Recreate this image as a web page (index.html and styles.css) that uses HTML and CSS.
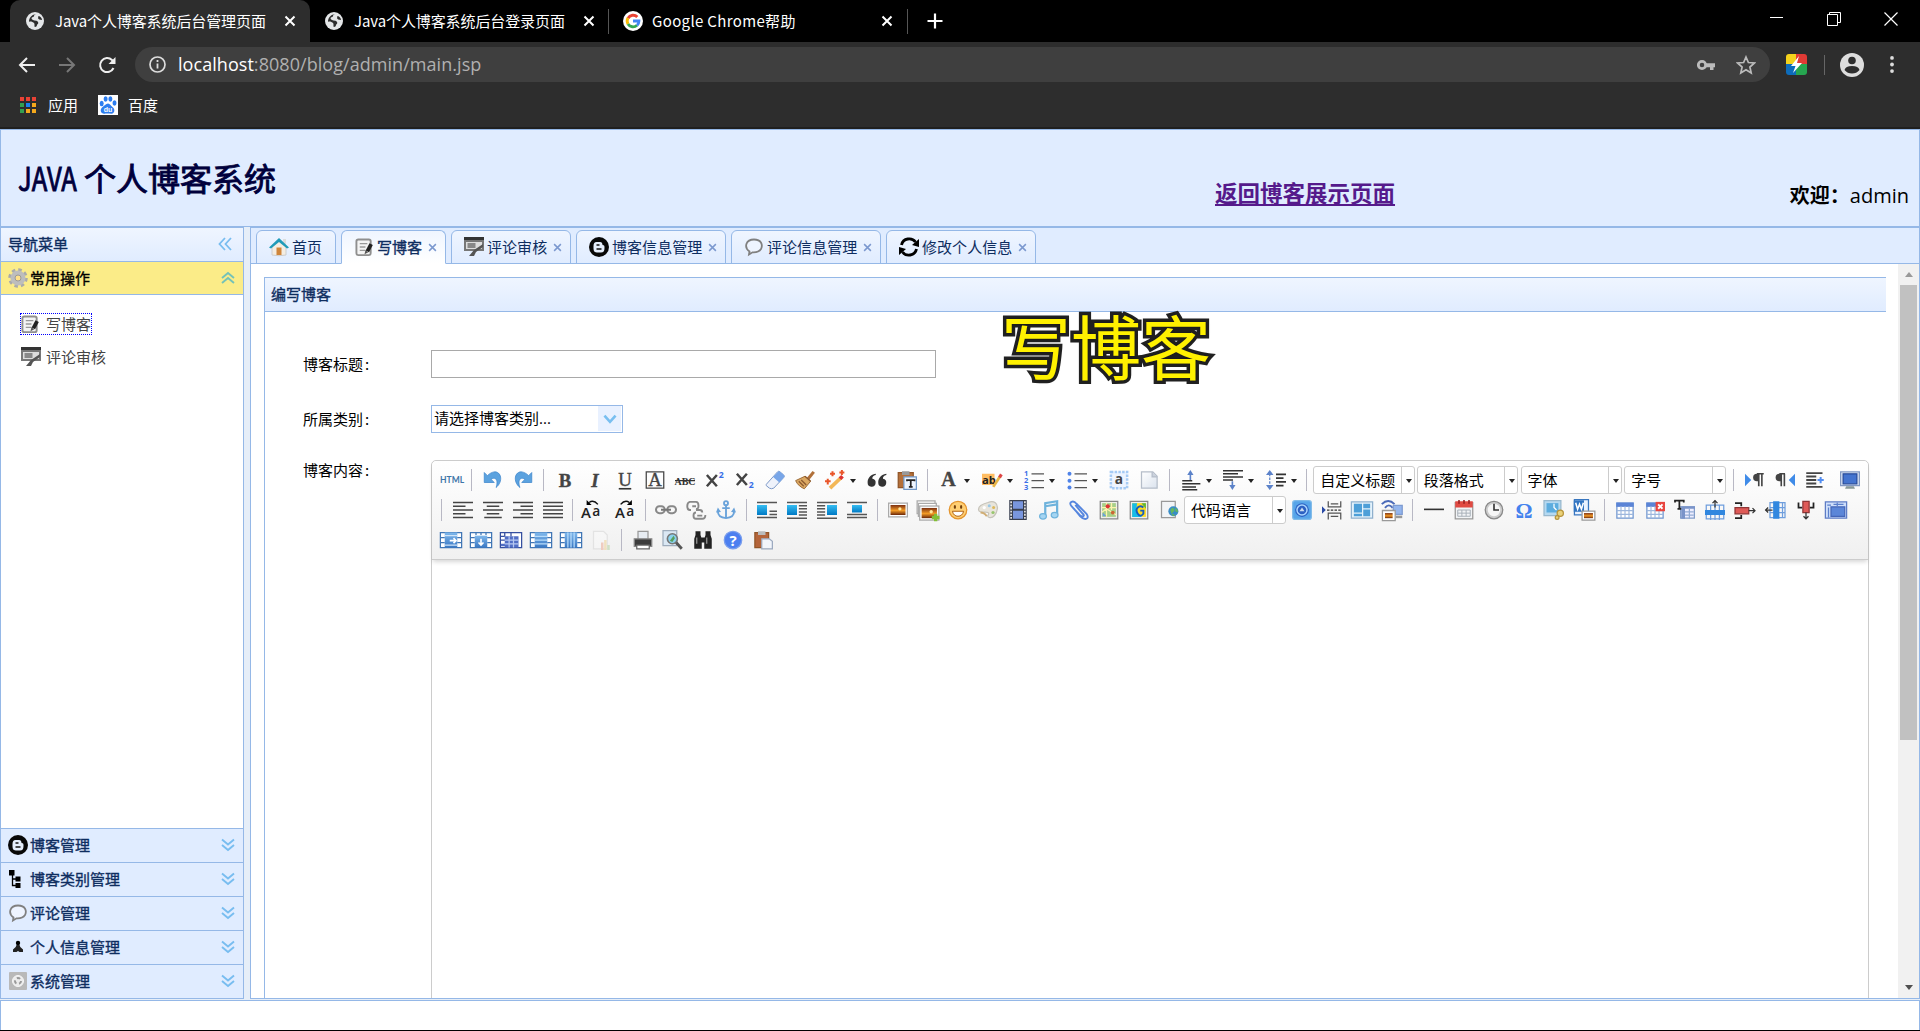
FILE: index.html
```html
<!DOCTYPE html>
<html lang="zh-CN">
<head>
<meta charset="utf-8">
<title>Java个人博客系统后台管理页面</title>
<link rel="stylesheet" href="styles.css">
</head>
<body>
<svg class="paints" aria-hidden="true">
<defs>
<linearGradient id="g-blue" x1="0" y1="0" x2="0" y2="1"><stop offset="0" stop-color="#7fb8ec"/><stop offset="1" stop-color="#3a78c4"/></linearGradient>
<linearGradient id="g-cyan" x1="0" y1="0" x2="0" y2="1"><stop offset="0" stop-color="#35bdf2"/><stop offset="1" stop-color="#0079c4"/></linearGradient>
<linearGradient id="g-sun" x1="0" y1="0" x2="0" y2="1"><stop offset="0" stop-color="#7c2f10"/><stop offset=".55" stop-color="#f39a25"/><stop offset="1" stop-color="#6a2508"/></linearGradient>
<linearGradient id="g-page" x1="0" y1="0" x2="1" y2="1"><stop offset="0" stop-color="#fff"/><stop offset="1" stop-color="#dbe3ee"/></linearGradient>
</defs>
</svg>
<svg class="sprite" aria-hidden="true">
<defs>
<g id="pic"><rect x=".5" y=".5" width="15" height="11" fill="#fff" stroke="#aaa"/><rect x="2" y="2" width="12" height="8" fill="url(#g-sun)"/><circle cx="9.5" cy="5" r="1.3" fill="#ffe69a"/></g>
<g id="grid"><path d="M1.500 2.500h13v12h-13z" fill="#fff" stroke="#6f95cf"/><path d="M1 2h14v3.500H1z" fill="#5b84d6"/><path d="M1.500 8.500h13M1.500 11.500h13M4.800 5v9.500M8 5v9.500M11.200 5v9.500" stroke="#9db7dd" stroke-width=".9"/></g>
</defs>
<symbol id="globe" viewBox="0 0 18 18"><circle cx="9" cy="9" r="9" fill="#e4e6e8"/><path d="M10 2c-3 1-1 2.500-3 3s-2 2 0 3 4 0 5 2-1 2-1 3-1 2-2 2 0-3-1-4-4-2-5-1c0-4 2-7 7-8zM12 4c2 0 4 2 4 4-2 0-4-1-4-2s1-1 0-2z" fill="#2d2d2d"/></symbol>
<symbol id="google" viewBox="0 0 20 20"><circle cx="10" cy="10" r="10" fill="#fff"/><g fill="none" stroke-width="2.900"><path d="M5 7.200A5.800 5.800 0 0 1 14.300 6" stroke="#ea4335"/><path d="M5 7a6 6 0 0 0 0 6" stroke="#fbbc05"/><path d="M5 13a5.800 5.800 0 0 0 9 1.200" stroke="#34a853"/><path d="M10 10h5.900c0 2-.7 3.400-1.900 4.400" stroke="#4285f4"/></g></symbol>
<symbol id="cross" viewBox="0 0 12 12"><path d="M1.500 1.500l9 9M10.500 1.500l-9 9" stroke="currentColor" stroke-width="2"/></symbol>
<symbol id="pencil" viewBox="0 0 20 20"><rect x="1.500" y="1.500" width="15" height="16.500" rx="2" fill="#f4f4f4" stroke="#8f8f8f" stroke-width="2"/><path d="M5 6h8M5 9.500h6M5 13h6" stroke="#999" stroke-width="1.400"/><path d="M17 6.500l-4 7.500" stroke="#222" stroke-width="4"/><path d="M11 13l3 2-4 2z" fill="#555"/></symbol>
<symbol id="review" viewBox="0 0 20 20"><path d="M0 0h20v4H0z" fill="#333"/><path d="M1 4h18v9H1z" fill="#ddd" stroke="#777" stroke-width="2"/><path d="M3.500 6h8v5h-8z" fill="#888"/><path d="M19 7l-9 6-5 6h5l2-4 7-5z" fill="#555"/></symbol>
<symbol id="blogger" viewBox="0 0 20 20"><circle cx="10" cy="10" r="10" fill="#080808"/><path d="M7.500 5h3.500c2 0 2.500 1.500 2.500 3 2 0 2 1 2 3 0 3-1 4.500-3.500 4.500h-4c-2 0-3.500-1-3.500-4V9c0-2.500 1-4 3-4z" fill="#e4edfb"/><path d="M7.500 8h3M7.500 12h5" stroke="#111" stroke-width="1.600"/></symbol>
<symbol id="bubble" viewBox="0 0 20 20"><path d="M5 17.500l.5-3C-.500 10 2 2.500 10 2.500c7.500 0 9 5.500 7 9.500-2 3-5.500 3.500-8.500 3.300z" fill="#eef4ff" stroke="#808080" stroke-width="1.800"/></symbol>
<symbol id="refresh" viewBox="0 0 20 20"><path d="M2.500 8C4 1 13 0 16.500 5M17.500 12C16 19 7 20 3.500 15" fill="none" stroke="#000" stroke-width="2.800"/><path d="M20 2v8l-7-2zM0 18v-8l7 2z"/></symbol>
<symbol id="home" viewBox="0 0 20 20"><path d="M3 9.500L10 4l7 5.500V18q-7 1.500-14 0z" fill="#f4ede2" stroke="#ccc"/><path d="M14 2h3v5h-3z" fill="#ddd"/><path d="M0 10.500L10 1l10 9.500-2 1L10 5l-8 6.500z" fill="#209bb9"/><path d="M7.500 10.500h5v7.500h-5z" fill="#cf853a"/></symbol>
<symbol id="gear" viewBox="0 0 20 20"><circle cx="10" cy="10" r="8" fill="none" stroke="#aaa" stroke-width="3.500" stroke-dasharray="3.400 2.880"/><circle cx="10" cy="10" r="5.300" fill="none" stroke="#bdbdbd" stroke-width="4.500"/><circle cx="10" cy="10" r="3" fill="#ffe08a" stroke="#999"/></symbol>
<symbol id="tree" viewBox="0 0 20 20"><path d="M1 1h5.500v5.500H1zM7.500 7.500h5v5h-5zM7.500 14h5v5h-5z"/><path d="M4.500 6v10.500H8M4.500 10H8" fill="none" stroke="#000" stroke-width="1.300"/></symbol>
<symbol id="person" viewBox="0 0 20 20"><circle cx="10" cy="6" r="2.200"/><path d="M8.500 8h3l.8 2 2.700 2.500V15h-3.500l-1.500-1-1.500 1H5v-2.500L7.700 10z" fill="#222"/></symbol>
<symbol id="sys" viewBox="0 0 20 20"><rect x="1" y="1" width="18" height="18" rx="1" fill="#b9b9b9"/><circle cx="10" cy="10" r="5.500" fill="#ececec" stroke="#f6f6f6"/><circle cx="10" cy="10" r="3" fill="none" stroke="#999" stroke-width="2" stroke-dasharray="3.500 2.780"/></symbol>
<symbol id="up2" viewBox="0 0 14 14"><path d="M1 7l6-5 6 5M1 12l6-5 6 5" fill="none" stroke="currentColor" stroke-width="1.900"/></symbol>
<symbol id="down2" viewBox="0 0 14 14"><path d="M1 1.500l6 5 6-5M1 7l6 5 6-5" fill="none" stroke="currentColor" stroke-width="1.900"/></symbol>
<symbol id="left2" viewBox="0 0 14 14"><path d="M7 1L1.500 7 7 13M13 1L7.500 7l5.500 6" fill="none" stroke="currentColor" stroke-width="1.800"/></symbol>

<symbol id="undo" viewBox="0 0 16 16"><path d="M1 2v8h8L6.500 7.500C10 5 12.500 8 10.500 14 16.500 9 14.500 1 9 1.500 7 1.800 5 3 3.500 4.500z" fill="#5ba2df" stroke="#3d86cc" stroke-width=".6"/></symbol>
<symbol id="bold" viewBox="0 0 16 16"><text x="8" y="13.500" text-anchor="middle" class="gs b">B</text></symbol>
<symbol id="italic" viewBox="0 0 16 16"><text x="8" y="13.500" text-anchor="middle" class="gs b i">I</text></symbol>
<symbol id="under" viewBox="0 0 16 16"><text x="8" y="12.500" text-anchor="middle" class="gs">U</text><path d="M3 15h10" stroke="#333" stroke-width="1.300"/></symbol>
<symbol id="abox" viewBox="0 0 16 16"><path d="M1 1.500h14v13H1z" fill="none" stroke="#444"/><text x="8" y="13" text-anchor="middle" class="gs">A</text></symbol>
<symbol id="abc" viewBox="0 0 16 16"><text x="8" y="12" text-anchor="middle" class="abc">ABC</text><path d="M0 8.500h16" stroke="#333"/></symbol>
<symbol id="sup" viewBox="0 0 16 16"><path d="M1.500 4l8 9M9.500 4l-8 9" stroke="#444" stroke-width="2"/><text x="11" y="6" class="ns">2</text></symbol>
<symbol id="sub" viewBox="0 0 16 16"><path d="M1.500 3l8 9M9.500 3l-8 9" stroke="#444" stroke-width="2"/><text x="11" y="14" class="ns">2</text></symbol>
<symbol id="eraser" viewBox="0 0 16 16"><path d="M1 11.500L10 1.500q1-1 2 0l3 2.500q1 1 0 2L7 14.500q-2 1-3.500 0L1 12.500z" fill="#eef2fb" stroke="#7c99c8" stroke-width=".8"/><path d="M6.500 5.500l3.800-4q1-1 2 0L15 4q1 1 0 2l-3.500 4z" fill="#78a6e8"/></symbol>
<symbol id="brush" viewBox="0 0 16 16"><path d="M15 1.500L10.500 7" stroke="#b0703a" stroke-width="2.500"/><path d="M8 5l4.500 4-5 6C5 14 2 12 .500 8.500z" fill="#dba862" stroke="#9c6b37" stroke-width=".8"/><path d="M8 5l4.500 4M3 9l4 4M5 8l4 4" stroke="#8c5a30"/></symbol>
<symbol id="wand" viewBox="0 0 16 16"><path d="M4 14.500L13 6" stroke="#f3b757" stroke-width="3"/><path d="M12 7l2-2" stroke="#d33" stroke-width="3"/><path d="M0 9h4.500M2.200 7v4.500M4 3h4M6 1v4M11.500 2h4M13.500 0v4" stroke="#e9562a" stroke-width="1.600"/></symbol>
<symbol id="quote" viewBox="0 0 16 16"><path d="M7 3C2 4 .500 7 .500 10a3.200 3.200 0 1 0 3.800-3C4 5.500 5 4.500 7 4zM15.500 3C10.500 4 9 7 9 10a3.200 3.200 0 1 0 3.800-3c-.3-1.500.7-2.500 2.700-3z" fill="#333"/></symbol>
<symbol id="pastet" viewBox="0 0 16 16"><path d="M1 2h12v12H1z" fill="#b4703a" stroke="#915527"/><path d="M4 1h6v3H4z" fill="#999"/><path d="M5.500 5.500h10v10h-10z" fill="#eef5ff" stroke="#7198c8"/><path d="M8 9V8h6v1M11 8v5M9.500 13.500h3" fill="none" stroke="#222" stroke-width="1.400"/></symbol>
<symbol id="paste" viewBox="0 0 16 16"><path d="M1.500 2h11v12h-11z" fill="#b4643a" stroke="#915527"/><path d="M4 1h6v3H4z" fill="#bbb"/><path d="M7 7h6l2.500 2v6H7z" fill="#f2f5fb" stroke="#9caac0"/></symbol>
<symbol id="fore" viewBox="0 0 16 16"><text x="7.500" y="12.500" text-anchor="middle" class="gs fa">A</text></symbol>
<symbol id="hilite" viewBox="0 0 16 16"><path d="M0 3h10v9H0z" fill="#ffbd62"/><text x="0" y="11" class="ab">ab</text><path d="M9 13.500L14.500 5" stroke="#e7b548" stroke-width="2.200"/><path d="M14 6l1.500-2.500" stroke="#d44" stroke-width="2.500"/></symbol>
<symbol id="ol" viewBox="0 0 16 16"><text x="0" y="5" class="nl">1</text><text x="0" y="10.500" class="nl">2</text><text x="0" y="16" class="nl">3</text><path d="M6 3h10M6 8.500h10M6 14h10" stroke="#555"/></symbol>
<symbol id="ul" viewBox="0 0 16 16"><g fill="#4f83e8"><circle cx="2" cy="3" r="1.600"/><circle cx="2" cy="8.500" r="1.600"/><circle cx="2" cy="14" r="1.600"/></g><path d="M6 3h10M6 8.500h10M6 14h10" stroke="#555"/></symbol>
<symbol id="asel" viewBox="0 0 16 16"><path d="M1.500 1.500h13v13h-13z" fill="#edf4ff" stroke="#a6cbf5" stroke-width="2" stroke-dasharray="2 1"/><text x="8" y="11.500" text-anchor="middle" class="as">a</text></symbol>
<symbol id="page" viewBox="0 0 16 16"><path d="M2 1.500h9L14.500 5v9.500H2z" fill="url(#g-page)" stroke="#b5bdc9"/><path d="M10.500 1.500V5.500h4" fill="#cbd2dd" stroke="#b5bdc9"/></symbol>
<symbol id="ptop" viewBox="0 0 16 16"><path d="M1 8.500h8M1 11h14.500M1 13.500h11M1 15.700h12" stroke="#333" stroke-width="1.200"/><path d="M7.500 8V3" stroke="#5b82c9" stroke-width="1.300"/><path d="M5 4l2.500-4L10 4z" fill="#5b82c9"/></symbol>
<symbol id="pbot" viewBox="0 0 16 16"><path d="M0 .500h16M0 3h12M0 5.500h16M0 8h8" stroke="#333" stroke-width="1.200"/><path d="M7.500 9v4" stroke="#5b82c9" stroke-width="1.300"/><path d="M5 12l2.500 4 2.500-4z" fill="#5b82c9"/></symbol>
<symbol id="lh" viewBox="0 0 16 16"><path d="M8 3.500h8M8 6.500h6M8 9.500h8M8 12.500h6" stroke="#333" stroke-width="1.300"/><path d="M3 3v11" stroke="#5b82c9" stroke-dasharray="2 1"/><path d="M0 4l3-4 3 4zM0 12l3 4 3-4z" fill="#5b82c9"/></symbol>
<symbol id="ltr" viewBox="0 0 16 16"><path d="M0 3v10l5-5z" fill="#3f8be8"/><path d="M15 3H9.500M11 3v10M13.500 3v10" fill="none" stroke="#444" stroke-width="1.300"/><path d="M11 3H9.500a2.800 2.800 0 0 0 0 6H11z" fill="#444"/></symbol>
<symbol id="rtl" viewBox="0 0 16 16"><path d="M16 3v10l-5-5z" fill="#3f8be8"/><path d="M8 3H3.500M5 3v10M7.500 3v10" fill="none" stroke="#444" stroke-width="1.300"/><path d="M5 3H3.500a2.800 2.800 0 0 0 0 6H5z" fill="#444"/></symbol>
<symbol id="indent" viewBox="0 0 16 16"><path d="M1 2.500h13M1 5.200h8M1 8h8M1 10.800h8M1 13.500h13" stroke="#444" stroke-width="1.500"/><path d="M10 8h5M12.500 5.500v5" stroke="#538df0" stroke-width="1.600"/></symbol>
<symbol id="screen" viewBox="0 0 16 16"><path d="M.5 1.500h15v11H.5z" fill="#dfe7f5" stroke="#8299c2"/><path d="M2.500 3h11v8h-11z" fill="#4474cf" stroke="#284c9b"/><path d="M5 13h6l1 2H4z" fill="#899"/></symbol>
<symbol id="al" viewBox="0 0 16 16"><path d="M0 2h16M0 5h10M0 8h16M0 11h10M0 14h16" stroke="#444" stroke-width="1.300"/></symbol>
<symbol id="ac" viewBox="0 0 16 16"><path d="M0 2h16M3 5h10M0 8h16M3 11h10M1 14h14" stroke="#444" stroke-width="1.300"/></symbol>
<symbol id="ar" viewBox="0 0 16 16"><path d="M0 2h16M6 5h10M0 8h16M6 11h10M0 14h16" stroke="#444" stroke-width="1.300"/></symbol>
<symbol id="aj" viewBox="0 0 16 16"><path d="M0 2h16M0 5h16M0 8h16M0 11h16M0 14h16" stroke="#444" stroke-width="1.300"/></symbol>
<symbol id="aal" viewBox="0 0 16 16"><text x="0" y="14.500" class="aa">A</text><text x="9" y="12.500" class="aa as2">a</text><path d="M13.500 3.500Q10-.500 6.500 2" fill="none" stroke="#111" stroke-width="1.200"/><path d="M4.500 0v4h4z"/></symbol>
<symbol id="aar" viewBox="0 0 16 16"><text x="0" y="14.500" class="aa">A</text><text x="9" y="12.500" class="aa as2">a</text><path d="M4.500 3.500Q8-.500 11.500 2" fill="none" stroke="#111" stroke-width="1.200"/><path d="M13.500 0v4h-4z"/></symbol>
<symbol id="link" viewBox="0 0 16 16"><g fill="none" stroke="#888" stroke-width="1.600"><rect x="0" y="5" width="7" height="5.500" rx="2.700"/><rect x="9" y="5" width="7" height="5.500" rx="2.700"/></g><path d="M4 7.800h8" stroke="#777" stroke-width="1.600"/></symbol>
<symbol id="unlink" viewBox="0 0 16 16"><g fill="none" stroke="#888" stroke-width="1.500"><path d="M4 8H3Q1 8 1 5t2-3.500h5q2 0 2 3T8 7M5 5h3M8 8h3q2 0 2 2M8 10q-2 0-2 2.500T8 15h5q2.500 0 2.500-3M9 12.500h4"/></g></symbol>
<symbol id="anchor" viewBox="0 0 16 16"><g fill="none" stroke="#6aa3da" stroke-width="1.500"><circle cx="8" cy="2.500" r="1.600"/><path d="M8 4v10M5 6.500h6M1.500 9q0 5 6.500 5.500Q14.500 14 14.500 9"/></g><path d="M0 10l1.500-4L4 9.500zM16 10l-1.500-4L12 9.500z" fill="#6aa3da"/></symbol>
<symbol id="fl1" viewBox="0 0 16 16"><path d="M0 2h16M10 9h6M10 11.500h6M0 14h16" stroke="#555" stroke-width="1.200"/><path d="M0 4h8v8H0z" fill="url(#g-cyan)"/></symbol>
<symbol id="fl2" viewBox="0 0 16 16"><path d="M0 2h16M9.500 4.500H16M9.500 7H16M9.500 9.500H16M9.500 12H16M0 14.500h16" stroke="#555" stroke-width="1.200"/><path d="M0 4h8v8H0z" fill="url(#g-cyan)"/></symbol>
<symbol id="fl3" viewBox="0 0 16 16"><path d="M0 2h16M0 4.500h6.500M0 7h6.500M0 9.500h6.500M0 12h6.500M0 14.500h16" stroke="#555" stroke-width="1.200"/><path d="M8 4h8v8H8z" fill="url(#g-cyan)"/></symbol>
<symbol id="fl4" viewBox="0 0 16 16"><path d="M0 2h16M0 11.500h16M0 14h16" stroke="#555" stroke-width="1.200"/><path d="M4 4h8v6H4z" fill="url(#g-cyan)"/></symbol>
<symbol id="image" viewBox="0 0 16 16"><use href="#pic" y="2"/></symbol>
<symbol id="images" viewBox="0 0 18 18"><path d="M.5 1.500h14v10H.5z" fill="#fff" stroke="#aaa"/><path d="M1.500 3.500h14v10h-14z" fill="#fff" stroke="#aaa"/><use href="#pic" x="2" y="5"/><path d="M15 11.500v6M12 14.500h6" stroke="#83bf36" stroke-width="2.600"/></symbol>
<symbol id="smile" viewBox="0 0 16 16"><circle cx="8" cy="8" r="7" fill="#ffcf73" stroke="#e4942d"/><ellipse cx="5.500" cy="5.500" rx=".9" ry="1.500" fill="#74400d"/><ellipse cx="10.500" cy="5.500" rx=".9" ry="1.500" fill="#74400d"/><path d="M3.500 9h9q-1 4-4.500 4T3.500 9z" fill="#fff" stroke="#b06315" stroke-width=".8"/></symbol>
<symbol id="palette" viewBox="0 0 16 16"><path d="M8 2c5-2 8 1 7.500 5S12 15 9 14s1-3-1-4-7 1-7.500-2S4 3 8 2z" fill="#e8e5dc" stroke="#c6c3ba"/><circle cx="5" cy="6" r="1.300" fill="#fff"/><circle cx="9" cy="4.500" r="1.200" fill="#9ac8e8"/><circle cx="12.500" cy="6" r="1.200" fill="#ddb95d"/><circle cx="12" cy="10" r="1.300" fill="#98c66e"/><path d="M2 10q3 0 5 3" stroke="#d0ad74" fill="none" stroke-width="1.500"/></symbol>
<symbol id="film" viewBox="0 0 16 16"><path d="M1 0h14v16H1z" fill="#393f50"/><path d="M4 1h8v6H4zM4 8.500h8V15H4z" fill="#7996de"/><path d="M2.500 1v14M13.500 1v14" stroke="#ddd" stroke-width="1.400" stroke-dasharray="1.500 1"/></symbol>
<symbol id="music" viewBox="0 0 16 16"><path d="M5 13V2.500L14.500 1v10.500M5 5l9.500-1.500" fill="none" stroke="#6fb3dc" stroke-width="1.800"/><ellipse cx="3.200" cy="13" rx="2.700" ry="2.200" fill="#a5d5f2" stroke="#6fb3dc"/><ellipse cx="12.500" cy="12" rx="2.700" ry="2.200" fill="#a5d5f2" stroke="#6fb3dc"/></symbol>
<symbol id="clip" viewBox="0 0 16 16"><path d="M5 4l6 7q1.500 1.500.5 2t-3-1L2 5Q0 2.500 2 1.500T6 3l8 8q2 3 0 4t-5-2L4 7" fill="none" stroke="#5686de" stroke-width="1.500"/></symbol>
<symbol id="map" viewBox="0 0 16 16"><path d="M1 1h14v14H1z" fill="#eee" stroke="#888"/><path d="M2.500 2.500h11v11h-11z" fill="#a8cf88"/><path d="M2 10l4-3 8 5M6 2v12M10 8V2M2 6h12" stroke="#fff3ad" fill="none"/><circle cx="7" cy="5" r="1.700" fill="#d33"/><path d="M3 10l3 3h-3z" fill="#6a9ee0"/><circle cx="11" cy="10" r="1.500" fill="#c63"/></symbol>
<symbol id="gmap" viewBox="0 0 16 16"><path d="M1 1h14v14H1z" fill="#eee" stroke="#888"/><path d="M2.500 2.500h11v11h-11z" fill="#ffdc21"/><path d="M2.500 2.500h4l-1 7 5 4h-8z" fill="#17bce9"/><path d="M10 2.500h3.500V7z" fill="#5bb53f"/><path d="M11.500 6Q9 4 7 6t0 5 4.500 0V8.500H9" fill="none" stroke="#165dc0" stroke-width="1.500"/></symbol>
<symbol id="pglobe" viewBox="0 0 16 16"><path d="M2 1h11v13H2z" fill="#f2f4f6" stroke="#999"/><circle cx="11.500" cy="9" r="4" fill="#388cc7"/><path d="M9 8q2-3 3-1t-1 3 2 2l-2 1-1-2zM13 6l2 2v2l-2-1z" fill="#64b660"/></symbol>
<symbol id="baidumap" viewBox="0 0 16 16"><rect x=".5" y=".5" width="15" height="15" rx="2" fill="#57a5e9" stroke="#82bce9"/><circle cx="8" cy="8" r="5.500" fill="#2c60c2"/><circle cx="8" cy="8" r="4" fill="none" stroke="#a9d5ff" stroke-width="1.200"/><path d="M6 9l2-3 2 3z" fill="#cde"/></symbol>
<symbol id="pbreak" viewBox="0 0 16 16"><path d="M0 5v6l3-3z" fill="#2b4ba5"/><path d="M5 1v4.500h10V1M5 15.500v-5h10v5M7 3h6M7 13h6" fill="none" stroke="#555"/><path d="M4 8h12" stroke="#333" stroke-dasharray="2 1"/></symbol>
<symbol id="template" viewBox="0 0 16 16"><path d="M-.500 1.500h17v13h-17z" fill="#e4f2fb" stroke="#8fb0cd"/><path d="M1.500 3h6.500v7H1.500zM1.500 11h6.500v2H1.500zM9 3h5.500v3.500H9zM9 7.500h5.500V13H9z" fill="#4d9fd8"/></symbol>
<symbol id="remote" viewBox="0 0 18 18"><path d="M1 4q5-5 10 0M3.500 7q3-4 6 0" fill="none" stroke="#4b6ab8" stroke-width="1.500"/><path d="M10 5h7v7h-7z" fill="#93b5ee" stroke="#7e9bd0"/><path d="M1.500 9h10v8h-10z" fill="#fff" stroke="#999"/><path d="M3.500 11h6v4h-6z" fill="url(#g-sun)"/><path d="M12 14h5" stroke="#999" stroke-width="2"/></symbol>
<symbol id="hr" viewBox="0 0 16 16"><path d="M0 7.500h16" stroke="#333" stroke-width="1.300"/></symbol>
<symbol id="cal" viewBox="0 0 16 16"><path d="M1 2h14v13H1z" fill="#f2f4f6" stroke="#999"/><path d="M1 1h14v5H1z" fill="#e14a42"/><path d="M4 0v3M8 0v3M12 0v3" stroke="#961e1e" stroke-width="1.200"/><path d="M3 8h10v5H3zM3 10.500h10M6.300 8v5M9.700 8v5" fill="none" stroke="#a9b1b9" stroke-width=".8"/></symbol>
<symbol id="clock" viewBox="0 0 16 16"><circle cx="8" cy="8" r="7" fill="#ccc" stroke="#888"/><circle cx="8" cy="8" r="5" fill="#f6f6f6"/><path d="M8 3v5h4" fill="none" stroke="#333" stroke-width="1.300"/></symbol>
<symbol id="omega" viewBox="0 0 16 16"><text x="8" y="14" text-anchor="middle" class="om">Ω</text></symbol>
<symbol id="search" viewBox="0 0 16 16"><path d="M0 .500h13.500v12H0z" fill="#b5d9f1" stroke="#98b8cd"/><path d="M2 2.500h9.500v7.500H2z" fill="#5cacde"/><path d="M8 3v3l2 2" stroke="#fff" fill="none"/><g fill="#ead179" stroke="#b69339"><circle cx="13" cy="10.500" r="2.500"/><circle cx="10.500" cy="14" r="1.500"/></g></symbol>
<symbol id="word" viewBox="0 0 18 18"><path d="M1.500.5h11v12h-11z" fill="#e9f2ff" stroke="#3876bf"/><path d="M1 1h8v9H1z" fill="#3275c2"/><path d="M2.500 3l1.500 5 1.500-4L7 8l1.500-5" fill="none" stroke="#fff" stroke-width="1.200"/><path d="M7.500 9.500h10v7h-10z" fill="#fff" stroke="#999"/><path d="M9 11h7v4H9z" fill="url(#g-sun)"/></symbol>
<symbol id="table" viewBox="0 0 16 16"><use href="#grid"/></symbol>
<symbol id="tdel" viewBox="0 0 16 16"><use href="#grid"/><path d="M8.500 1.500H16V9H8.500z" fill="#e8453f"/><path d="M10.500 3.500l3.500 3.500M14 3.500L10.500 7" stroke="#fff" stroke-width="1.500"/></symbol>
<symbol id="tprop" viewBox="0 0 16 16"><path d="M4.500 5.500h11v9h-11z" fill="#eef" stroke="#829dc9"/><path d="M5 5h11v2H5zM5 5h3v10H5z" fill="#7a94c9"/><path d="M8 9.500h7M8 12h7M11.500 7v8" stroke="#93acd5"/><path d="M0 2V.500h7V2M3.500.500v6M2 7h3" fill="none" stroke="#222" stroke-width="1.400"/></symbol>
<symbol id="rowin" viewBox="0 0 16 16"><path d="M1 4h14v11H1zM4.500 4v12M8 4v12M11.500 4v12" fill="none" stroke="#6f9edd"/><path d="M0 8h16v4H0z" fill="#3187df"/><path d="M8 6V0M6 2.500L8 .500l2 2" fill="none" stroke="#333"/></symbol>
<symbol id="rowdel" viewBox="0 0 16 16"><path d="M0 2.500h5V5M0 14.500h5V12" fill="none" stroke="#222" stroke-width="1.400"/><path d="M0 6h11v5H0z" fill="#df5a57" stroke="#8f3535"/><path d="M11 8.500h5M14 6.500l2 2-2 2" fill="none" stroke="#333"/></symbol>
<symbol id="colin" viewBox="0 0 16 16"><path d="M4 2h12v12H4zM4 6h12M4 10h12M14 2v12" fill="none" stroke="#6f9edd"/><path d="M6.500 1h5v14h-5z" fill="#3187df"/><path d="M6 8H0M2.500 6L.500 8l2 2" fill="none" stroke="#333"/></symbol>
<symbol id="coldel" viewBox="0 0 16 16"><path d="M2 2v4h3M14 2v4h-3" fill="none" stroke="#222" stroke-width="1.400"/><path d="M5.500 1h5v9h-5z" fill="#df5a57" stroke="#8f3535"/><path d="M8 10v5M6 13l2 2 2-2" fill="none" stroke="#333"/></symbol>
<symbol id="split" viewBox="0 0 16 16"><path d="M-.500 1.500h17v13h-17z" fill="#cfdffa" stroke="#5e7cc5"/><path d="M4 5.500h11V13H4z" fill="#5b86d8" stroke="#4466b8"/><path d="M1 4h3M6 3.500h8M2 6v8M9 2v3" stroke="#5b7fcb"/></symbol>
<symbol id="mr" viewBox="0 0 16 16"><path d="M-.500 2h17v12h-17z" fill="#fff" stroke="#4076b5"/><path d="M3 2h10v12H3z" fill="url(#g-blue)"/><path d="M0 6h3M0 10h3M13 6h3M13 10h3" stroke="#4076b5"/><path d="M3 4.500h10M3 12h10" stroke="#cfe4f8"/><path d="M7 8.500h5M10 6.500l2 2-2 2" fill="none" stroke="#fff" stroke-width="1.300"/></symbol>
<symbol id="md" viewBox="0 0 16 16"><path d="M-.500 2h17v12h-17z" fill="#fff" stroke="#4076b5"/><path d="M3 4.500h10V14H3z" fill="url(#g-blue)"/><path d="M0 6h3M0 10h3M13 6h3M13 10h3M4 2v2M8 2v2M12 2v2" stroke="#4076b5"/><path d="M8 7v5M6 10l2 2 2-2" fill="none" stroke="#fff" stroke-width="1.300"/></symbol>
<symbol id="mg" viewBox="0 0 16 16"><path d="M-.500 2h17v12h-17z" fill="#fff" stroke="#354f9f"/><path d="M3 5h11v9H3zM0 11h14v2H0z" fill="#516ec5"/><path d="M6.500 5v9M10 5v9M3 8h11M3 11h11" stroke="#b7c8f1"/><path d="M0 5h3M0 8h3M3 2v3M8 2v3" stroke="#354f9f"/></symbol>
<symbol id="mrow" viewBox="0 0 16 16"><path d="M-.500 2h17v12h-17z" fill="#fff" stroke="#4076b5"/><path d="M3 2h10v12H3z" fill="url(#g-blue)"/><path d="M3 5h10M3 8h10M3 11h10" stroke="#b7dcfa"/><path d="M0 6h3M0 10h3M13 6h3M13 10h3" stroke="#4076b5"/></symbol>
<symbol id="mcol" viewBox="0 0 16 16"><path d="M-.500 2h17v12h-17z" fill="#fff" stroke="#4076b5"/><path d="M3 2h10v12H3z" fill="url(#g-blue)"/><path d="M5.500 2v12M8 2v12M10.500 2v12" stroke="#b7dcfa"/><path d="M0 6h3M0 10h3M13 6h3M13 10h3" stroke="#4076b5"/></symbol>
<symbol id="chart" viewBox="0 0 16 16"><g opacity=".28"><path d="M2 1h8l3 3v11H2z" fill="#fff" stroke="#bbb"/><path d="M8 10h2v6H8z" fill="#e96b3e"/><path d="M10.500 8h2v8h-2z" fill="#efb73e"/><path d="M13 12h2v4h-2z" fill="#78b654"/></g></symbol>
<symbol id="print" viewBox="0 0 16 16"><path d="M4 1h8v7H4z" fill="#e7ecf2" stroke="#999"/><path d="M1 7h14v6H1z" fill="#3c3c3c" stroke="#888"/><path d="M3 12h10v3H3z" fill="#fff" stroke="#666"/></symbol>
<symbol id="preview" viewBox="0 0 16 16"><path d="M0 .500h11v12H0z" fill="#dbe8f4" stroke="#9eacbc"/><circle cx="7.500" cy="7" r="4" fill="#8ad2ed" stroke="#777" stroke-width="1.300"/><path d="M10.500 10l4.500 5" stroke="#555" stroke-width="2.300"/><path d="M5.500 8.500l3-4 1 2-2 3z" fill="#579f5b"/></symbol>
<symbol id="find" viewBox="0 0 16 16"><path d="M2 1h4v3l1 3v8H1V7l1-3zM10 1h4v3l1 3v8H9V7l1-3zM6 6h4v4H6z" fill="#222"/><path d="M3 6v5M11 6v5" stroke="#999"/></symbol>
<symbol id="help" viewBox="0 0 16 16"><circle cx="8" cy="8" r="7" fill="#4c7ff0" stroke="#799eed"/><text x="8" y="12.500" text-anchor="middle" class="hq">?</text></symbol>
</svg>

<header class="browser">
  <div class="tabstrip">
    <div class="btab on"><svg class="fav"><use href="#globe"/></svg><span>Java个人博客系统后台管理页面</span><svg class="bx"><use href="#cross"/></svg></div>
    <div class="btab"><svg class="fav"><use href="#globe"/></svg><span>Java个人博客系统后台登录页面</span><svg class="bx"><use href="#cross"/></svg></div>
    <div class="btab google"><svg class="fav"><use href="#google"/></svg><span>Google Chrome帮助</span><svg class="bx"><use href="#cross"/></svg></div>
    <svg class="plus" viewBox="0 0 16 16"><path d="M8 .500v15M.5 8h15" stroke="#fff" stroke-width="2.200"/></svg>
    <div class="winctl">
      <svg viewBox="0 0 14 14"><path d="M0 5.500h13" stroke="#fff"/></svg>
      <svg viewBox="0 0 14 14"><path d="M.5 2.500h10v11H.5zM2.500 2.500v-2h11v10h-3" fill="none" stroke="#fff"/></svg>
      <svg viewBox="0 0 14 14"><path d="M.5.500l13 13M13.500.500l-13 13" stroke="#fff" stroke-width="1.200"/></svg>
    </div>
  </div>
  <div class="toolbar">
    <svg class="nav" viewBox="0 0 18 18"><path d="M17 9H2M9 2L2 9l7 7" fill="none" stroke="#eee" stroke-width="2"/></svg>
    <svg class="nav" viewBox="0 0 18 18"><path d="M1 9h15M9 2l7 7-7 7" fill="none" stroke="#777" stroke-width="2"/></svg>
    <svg class="nav" viewBox="0 0 18 18"><path d="M15.500 12A7 7 0 1 1 14 4l2 2" fill="none" stroke="#eee" stroke-width="2"/><path d="M17.500 1v7h-7z" fill="#eee"/></svg>
    <div class="omni">
      <svg class="info" viewBox="0 0 17 17"><circle cx="8.500" cy="8.500" r="7.500" fill="none" stroke="#ddd" stroke-width="1.700"/><path d="M8.500 4v2M8.500 7.500v5" stroke="#ddd" stroke-width="1.800"/></svg>
      <span class="url"><b>localhost</b>:8080/blog/admin/main.jsp</span>
      <svg class="key" viewBox="0 0 18 12"><circle cx="5" cy="6" r="3.700" fill="none" stroke="#bbb" stroke-width="2.800"/><path d="M8 4.200h10v4h-1.500V11H13V8.200H8z" fill="#bbb"/></svg>
      <svg class="star" viewBox="0 0 20 20"><path d="M10 2l2.400 5.500 6 .5-4.500 4 1.300 6-5.200-3.200L4.800 18l1.300-6L1.600 8l6-.5z" fill="none" stroke="#bbb" stroke-width="1.700"/></svg>
    </div>
    <svg class="ext" viewBox="0 0 21 21"><clipPath id="rr"><rect width="21" height="21" rx="3"/></clipPath><g clip-path="url(#rr)"><path d="M0 0h10v10H0z" fill="#f4d21c"/><path d="M10 0h11v10H10z" fill="#e03a35"/><path d="M0 10h10v11H0z" fill="#0d6cbb"/><path d="M10 10h11v11H10z" fill="#26a650"/></g><path d="M13 2L5 12h4.500L7 19l9-10h-5z" fill="#fff"/></svg>
    <i class="tsep"></i>
    <svg class="avatar" viewBox="0 0 24 24"><circle cx="12" cy="12" r="12" fill="#ddd"/><circle cx="12" cy="7.500" r="3.800" fill="#2d2d2d"/><path d="M4.500 17q1-4 7.500-4t7.500 4q-3 3.500-7.500 3.500T4.500 17z" fill="#2d2d2d"/></svg>
    <svg class="dots" viewBox="0 0 4 18"><g fill="#ddd"><circle cx="2" cy="2" r="2"/><circle cx="2" cy="9" r="2"/><circle cx="2" cy="16" r="2"/></g></svg>
  </div>
  <div class="bookmarks">
    <svg class="apps" viewBox="0 0 16 16"><path d="M0 0h4v4H0zM6 0h4v4H6zM12 0h4v4h-4z" fill="#e94235"/><path d="M0 6h4v4H0zM0 12h4v4H0z" fill="#34a050"/><path d="M6 6h4v4H6z" fill="#1a82f0"/><path d="M12 6h4v4h-4zM12 12h4v4h-4zM6 12h4v4H6z" fill="#f5a91c"/></svg>
    <span>应用</span>
    <svg class="baidu" viewBox="0 0 20 20"><path d="M0 0h20v20H0z" fill="#fff"/><g fill="#2c7df0"><ellipse cx="3.700" cy="8.500" rx="2" ry="2.700"/><ellipse cx="7.600" cy="4" rx="2" ry="2.700"/><ellipse cx="12.400" cy="4" rx="2" ry="2.700"/><ellipse cx="16.500" cy="8" rx="2" ry="2.700"/><path d="M10 8.500c2 0 3 2.500 5 4s2 6-1.500 6.200c-2 0-5-.4-7 0C3 19 1.500 15 4 12.500c2-1.600 4-4 6-4z"/></g><text x="10" y="17" text-anchor="middle" class="du">du</text></svg>
    <span>百度</span>
  </div>
</header>

<div class="app">
  <div class="north">
    <h1 class="logo"><span>JAVA</span>个人博客系统</h1>
    <a class="back">返回博客展示页面</a>
    <p class="welcome"><b>欢迎：</b>admin</p>
  </div>
  <div class="middle">
    <aside class="west">
      <div class="whead"><span>导航菜单</span><svg class="chev"><use href="#left2"/></svg></div>
      <div class="acc on"><svg class="i20"><use href="#gear"/></svg><span>常用操作</span><svg class="chev"><use href="#up2"/></svg></div>
      <ul class="menu">
        <li class="focus"><svg class="i20"><use href="#pencil"/></svg><span>写博客</span></li>
        <li><svg class="i20"><use href="#review"/></svg><span>评论审核</span></li>
      </ul>
      <div class="acc"><svg class="i20"><use href="#blogger"/></svg><span>博客管理</span><svg class="chev"><use href="#down2"/></svg></div>
      <div class="acc"><svg class="i20"><use href="#tree"/></svg><span>博客类别管理</span><svg class="chev"><use href="#down2"/></svg></div>
      <div class="acc"><svg class="i20"><use href="#bubble"/></svg><span>评论管理</span><svg class="chev"><use href="#down2"/></svg></div>
      <div class="acc"><svg class="i20"><use href="#person"/></svg><span>个人信息管理</span><svg class="chev"><use href="#down2"/></svg></div>
      <div class="acc"><svg class="i20"><use href="#sys"/></svg><span>系统管理</span><svg class="chev"><use href="#down2"/></svg></div>
    </aside>
    <main class="center">
      <nav class="tabs">
        <div class="tab home"><svg class="i20"><use href="#home"/></svg><span>首页</span></div>
        <div class="tab on"><svg class="i20"><use href="#pencil"/></svg><span>写博客</span><svg class="tx"><use href="#cross"/></svg></div>
        <div class="tab"><svg class="i20"><use href="#review"/></svg><span>评论审核</span><svg class="tx"><use href="#cross"/></svg></div>
        <div class="tab"><svg class="i20"><use href="#blogger"/></svg><span>博客信息管理</span><svg class="tx"><use href="#cross"/></svg></div>
        <div class="tab"><svg class="i20"><use href="#bubble"/></svg><span>评论信息管理</span><svg class="tx"><use href="#cross"/></svg></div>
        <div class="tab"><svg class="i20"><use href="#refresh"/></svg><span>修改个人信息</span><svg class="tx"><use href="#cross"/></svg></div>
      </nav>
      <div class="view">
        <section class="panel">
          <h2>编写博客</h2>
          <div class="form">
            <label>博客标题<em>:</em></label><div class="input"></div>
            <label>所属类别<em>:</em></label>
            <div class="combo"><span>请选择博客类别...</span><i><svg viewBox="0 0 12 9"><path d="M1 1.500l5 5.500 5-5.500" fill="none" stroke="#79bff0" stroke-width="2.400"/></svg></i></div>
            <label>博客内容<em>:</em></label>
            <div class="editor">
              <div class="etool">
                <div class="row one">
                  <span class="t html">HTML</span><i class="s"></i>
                  <svg class="t"><use href="#undo"/></svg><svg class="t flip"><use href="#undo"/></svg><i class="s"></i>
                  <svg class="t"><use href="#bold"/></svg><svg class="t"><use href="#italic"/></svg><svg class="t"><use href="#under"/></svg><svg class="t"><use href="#abox"/></svg><svg class="t"><use href="#abc"/></svg><svg class="t"><use href="#sup"/></svg><svg class="t"><use href="#sub"/></svg><svg class="t"><use href="#eraser"/></svg><svg class="t"><use href="#brush"/></svg><svg class="t"><use href="#wand"/></svg><i class="dd"></i><svg class="t"><use href="#quote"/></svg><svg class="t"><use href="#pastet"/></svg><i class="s"></i>
                  <svg class="t"><use href="#fore"/></svg><i class="dd"></i><svg class="t"><use href="#hilite"/></svg><i class="dd"></i><svg class="t"><use href="#ol"/></svg><i class="dd"></i><svg class="t"><use href="#ul"/></svg><i class="dd"></i><svg class="t"><use href="#asel"/></svg><svg class="t"><use href="#page"/></svg><i class="s"></i>
                  <svg class="t"><use href="#ptop"/></svg><i class="dd"></i><svg class="t"><use href="#pbot"/></svg><i class="dd"></i><svg class="t"><use href="#lh"/></svg><i class="dd"></i><i class="s narrow"></i>
                  <span class="sel">自定义标题</span><span class="sel">段落格式</span><span class="sel">字体</span><span class="sel">字号</span><i class="s"></i>
                  <svg class="t"><use href="#ltr"/></svg><svg class="t"><use href="#rtl"/></svg><svg class="t"><use href="#indent"/></svg><svg class="t last"><use href="#screen"/></svg>
                </div>
                <div class="row two">
                  <i class="s"></i><svg class="t"><use href="#al"/></svg><svg class="t"><use href="#ac"/></svg><svg class="t"><use href="#ar"/></svg><svg class="t"><use href="#aj"/></svg><i class="s tight"></i>
                  <svg class="t wide"><use href="#aal"/></svg><svg class="t"><use href="#aar"/></svg><i class="s"></i>
                  <svg class="t"><use href="#link"/></svg><svg class="t"><use href="#unlink"/></svg><svg class="t"><use href="#anchor"/></svg><i class="s"></i>
                  <svg class="t"><use href="#fl1"/></svg><svg class="t"><use href="#fl2"/></svg><svg class="t"><use href="#fl3"/></svg><svg class="t"><use href="#fl4"/></svg><i class="s"></i>
                  <span class="media"><svg class="t"><use href="#image"/></svg><svg class="t big"><use href="#images"/></svg><svg class="t"><use href="#smile"/></svg><svg class="t"><use href="#palette"/></svg><svg class="t"><use href="#film"/></svg><svg class="t"><use href="#music"/></svg><svg class="t"><use href="#clip"/></svg><svg class="t"><use href="#map"/></svg><svg class="t"><use href="#gmap"/></svg><svg class="t"><use href="#pglobe"/></svg></span>
                  <span class="sel">代码语言</span>
                  <svg class="t"><use href="#baidumap"/></svg><svg class="t"><use href="#pbreak"/></svg><svg class="t"><use href="#template"/></svg><svg class="t big"><use href="#remote"/></svg><i class="s wider"></i>
                  <svg class="t"><use href="#hr"/></svg><svg class="t"><use href="#cal"/></svg><svg class="t"><use href="#clock"/></svg><svg class="t"><use href="#omega"/></svg><svg class="t"><use href="#search"/></svg><svg class="t big"><use href="#word"/></svg><i class="s"></i>
                  <span class="tbl"><svg class="t"><use href="#table"/></svg><svg class="t"><use href="#tdel"/></svg><svg class="t"><use href="#tprop"/></svg><svg class="t"><use href="#rowin"/></svg><svg class="t"><use href="#rowdel"/></svg><svg class="t"><use href="#colin"/></svg><svg class="t"><use href="#coldel"/></svg><svg class="t"><use href="#split"/></svg></span>
                </div>
                <div class="row">
                  <svg class="t"><use href="#mr"/></svg><svg class="t"><use href="#md"/></svg><svg class="t"><use href="#mg"/></svg><svg class="t"><use href="#mrow"/></svg><svg class="t"><use href="#mcol"/></svg><svg class="t"><use href="#chart"/></svg><i class="s"></i>
                  <svg class="t"><use href="#print"/></svg><svg class="t"><use href="#preview"/></svg><svg class="t"><use href="#find"/></svg><svg class="t"><use href="#help"/></svg><svg class="t"><use href="#paste"/></svg>
                </div>
              </div>
            </div>
          </div>
        </section>
        <div class="scroll"><i class="up"></i><b></b><i class="down"></i></div>
        <div class="caption">写博客</div>
      </div>
    </main>
  </div>
  <div class="south"></div>
</div>
</body>
</html>
```

FILE: styles.css
```css
* { box-sizing: border-box; }
body { margin: 0; width: 1920px; height: 1031px; overflow: hidden; background: #000; color: #000; font: 15px/20px "Open Sans", "Noto Sans CJK SC", sans-serif; display: flex; flex-direction: column; }
svg { display: block; flex: none; }
symbol { overflow: visible; }
i, b, em { font-style: normal; }
.paints { position: absolute; width: 0; height: 0; }
.sprite { display: none; }

/* browser frame */
.browser { height: 129px; background: #2d2d2d; border-bottom: 2px solid #202020; flex: none; font-family: "Noto Sans CJK SC", sans-serif; }
.tabstrip { height: 42px; background: #000; display: flex; padding-left: 10px; color: #fff; }
.btab { width: 299px; display: flex; align-items: center; padding: 0 13px 0 15px; position: relative; white-space: nowrap; }
.btab.on { background: #2d2d2d; border-radius: 10px 10px 0 0; width: 300px; padding-left: 16px; padding-right: 14px; }
.btab span { margin-left: 11px; flex: 1; letter-spacing: -.1px; }
.btab:not(.on) { border-right: 1px solid #444; border-image: linear-gradient(#000 22%, #555 22%, #555 80%, #000 80%) 1; }
.btab.google span { margin-left: 9px; letter-spacing: .35px; }
.btab.google { padding-left: 14px; padding-right: 14px; }
.fav { width: 18px; height: 18px; }
.google .fav { width: 20px; height: 20px; }
.bx { width: 12px; height: 12px; }
.plus { width: 16px; height: 16px; margin: 13px 0 0 19px; }
.winctl { margin-left: auto; display: flex; gap: 43px; padding: 12px 22px 0 0; }
.winctl svg { width: 14px; height: 14px; }
.toolbar { height: 44px; display: flex; align-items: center; padding: 1px 0 0 18px; }
.nav { width: 18px; height: 18px; margin-right: 22px; }
.omni { width: 1635px; height: 35px; margin-left: -3px; background: #3f3f3f; border-radius: 18px; display: flex; align-items: center; padding: 0 14px; }
.info { width: 17px; height: 17px; margin-right: 12px; }
.url { font: 18px/22px "Open Sans", sans-serif; color: #b0b0b0; flex: 1; letter-spacing: .05px; margin-top: -2px; }
.url b { font-weight: 400; color: #fff; }
.key { width: 18px; height: 12px; margin-right: 21px; }
.star { width: 20px; height: 20px; }
.ext { width: 21px; height: 21px; margin-left: 16px; }
.tsep { width: 1px; height: 20px; background: #666; margin: 0 15px 0 17px; }
.avatar { width: 24px; height: 24px; }
.dots { width: 4px; height: 17px; margin-left: 26px; }
.bookmarks { height: 38px; display: flex; align-items: center; padding-left: 20px; color: #fff; }
.apps { width: 16px; height: 16px; margin-right: 12px; }
.baidu { width: 20px; height: 20px; margin: 0 10px 0 20px; }
.du { font: bold 7px "Liberation Sans", sans-serif; fill: #fff; }

/* layout regions */
.app { height: 901px; background: #e6eef8; display: flex; flex-direction: column; flex: none; }
.north { height: 98px; background: #e0ecff; border: 1px solid #95b8e7; display: flex; align-items: flex-start; padding: 0 10px 0 17px; }
.logo { margin: 29px 0 0; font: 400 32px/36px "Noto Sans CJK SC", sans-serif; color: #00003c; display: flex; -webkit-text-stroke: .9px #00003c; width: 1197px; }
.logo span { display: inline-block; width: 66px; transform: scaleX(.8); transform-origin: 0 50%; }
.back { margin-top: 46px; font: bold 22.5px/32px "Noto Sans CJK SC", sans-serif; color: #551a8b; text-decoration: underline; }
.welcome { margin: 51px 0 0 auto; font: 20px/30px "Open Sans", "Noto Sans CJK SC", sans-serif; }
.middle { height: 772px; display: flex; gap: 6px; }
.south { margin-top: 1px; height: 30px; background: #fff; border: 1px solid #95b8e7; border-bottom: 0; }

/* navigation accordion */
.west { width: 244px; border: 1px solid #95b8e7; background: #fff; display: flex; flex-direction: column; color: #0e2d5f; }
.whead, .acc { display: flex; align-items: center; -webkit-text-stroke: .35px; }
.whead { height: 34px; background: linear-gradient(#eff5ff, #e0ecff); border-bottom: 1px solid #95b8e7; padding: 0 11px 2px 7px; }
.chev { width: 14px; height: 14px; margin-left: auto; color: #78bdf0; }
.acc { height: 34px; background: #e0ecff; border-top: 1px solid #95b8e7; padding: 0 8px 1px 7px; }
.acc.on { height: 33px; border-top: 0; border-bottom: 1px solid #95b8e7; background: #fbec88; color: #000; padding-bottom: 0; }
.acc.on .chev { color: #74c2b8; }
.acc span { margin-left: 2px; }
.acc:not(.on) span { margin-top: -1px; }
.i20 { width: 20px; height: 20px; }
.menu { margin: 0; padding: 18px 0 0 19px; list-style: none; flex: 1; color: #444; display: flex; flex-direction: column; align-items: flex-start; gap: 11px; }
.menu li { display: flex; align-items: center; height: 22px; gap: 5px; border: 1px solid transparent; }
.menu .focus { border: 1px dotted #00f; }
.menu .focus .i20 { width: 19px; height: 19px; margin: 0 1px 0 0; }

/* tabs */
.center { width: 1670px; border: 1px solid #95b8e7; display: flex; flex-direction: column; background: #fff; }
.tabs { height: 36px; flex: none; background: #e0ecff; border-bottom: 1px solid #95b8e7; display: flex; gap: 5px; padding: 2px 0 0 5px; color: #0e2d5f; }
.tab { height: 34px; width: 150px; flex: none; border: 1px solid #95b8e7; border-radius: 6px 6px 0 0; background: linear-gradient(#eff5ff, #e0ecff); display: flex; align-items: center; padding-left: 12px; white-space: nowrap; }
.tab span { margin-left: 3px; letter-spacing: .05px; }
.tab.home { width: 80px; }
.tab.on { width: 105px; background: linear-gradient(#eff5ff, #fff); border-bottom-color: #fff; padding-left: 13px; }
.tab.on span { -webkit-text-stroke: .35px; }
.tab.on .i20 { width: 19px; height: 19px; }
.tab:nth-child(3) { width: 120px; }
.tx { width: 9px; height: 9px; margin-left: 6px; color: #7b98cf; }
.view { flex: 1; min-height: 0; display: flex; overflow: hidden; position: relative; }
.panel { margin: 13px 12px 0 13px; width: 1622px; height: 800px; border: 1px solid #95b8e7; border-right: 0; flex: none; }
.panel h2 { margin: 0; height: 34px; padding-left: 6px; font-size: 15px; font-weight: 400; -webkit-text-stroke: .35px; line-height: 33px; color: #0e2d5f; background: linear-gradient(#eff5ff, #e0ecff); border-bottom: 1px solid #95b8e7; }

/* form */
.form { padding: 38px 17px 0 38px; display: grid; grid-template-columns: 128px 1438px; grid-template-rows: 28px 28px 500px; row-gap: 27px; align-items: start; }
.form label { line-height: 27px; font-family: "Noto Sans CJK SC", sans-serif; white-space: nowrap; }
.form label em { margin-left: 2px; }
.form label:nth-of-type(3) { line-height: 19px; }
.input { width: 505px; height: 28px; border: 1px solid #a9a9a9; }
.combo { width: 192px; height: 28px; border: 1px solid #95b8e7; display: flex; line-height: 25px; padding-left: 2px; justify-content: space-between; }
.combo i { width: 24px; background: #e9f1ff; display: flex; align-items: center; justify-content: center; border: 0 solid #fff; border-width: 0 1px 1px 0; }
.combo svg { width: 14px; height: 10px; }

/* rich text editor */
.editor { height: 700px; border: 1px solid #ccc; border-radius: 5px 5px 0 0; }
.etool { height: 99px; padding: 4px 0 0 4px; border-bottom: 1px solid #ccc; border-radius: 5px 5px 0 0; background: linear-gradient(#fff, #f0f0f0); box-shadow: 0 3px 4px -1px rgba(0,0,0,.16); }
.row { height: 30px; display: flex; align-items: center; }
.t { width: 30px; height: 20px; overflow: visible; padding: 0 5px; flex: none; }
.t.big { height: 23px; padding: 0 3px; }
.t.flip { transform: scaleX(-1); }
.t.last { margin-left: 5px; }
.t.wide { margin-right: 4px; }
.html { font: bold 8.5px/20px "Lato", sans-serif; padding: 0 0 0 4px; color: #3f76a8; }
.s { width: 12px; height: 22px; flex: none; background: linear-gradient(#b8b8c4, #b8b8c4) 5px 0 / 1px 100% no-repeat; }
.s.narrow { width: 10px; background-position: 3px 0; }
.two .s { width: 11px; }
.two .s:first-child, .two .s.wider { width: 12px; }
.two .s.tight { width: 8px; background-position: 4px 0; }
.dd { width: 12.4px; height: 6px; flex: none; position: relative; }
.dd::before, .sel::after { content: ""; border: 3.500px solid transparent; border-top: 4.500px solid #222; border-bottom: 0; position: absolute; }
.dd::before { left: 0; top: 2px; }
.sel { width: 101.500px; height: 28px; flex: none; margin-right: 2.200px; border: 1px solid #ccc; border-radius: 3px; background: linear-gradient(#ccc, #ccc) calc(100% - 12px) 0 / 1px 100% no-repeat #fff; padding-left: 6px; font: 15px/25px "Noto Sans CJK SC", sans-serif; position: relative; white-space: nowrap; }
.sel::after { right: 2px; top: 12px; }
.two .sel { margin-right: 1px; }
.media { display: flex; align-items: center; width: 301px; justify-content: space-between; }
.tbl { display: flex; align-items: center; gap: .2px; }
.gs { font: 15px "Liberation Serif", serif; fill: #444; stroke: #444; stroke-width: .3px; }
.gs.b { font-weight: 700; }
.gs.i { font-style: italic; }
.gs.fa { font-weight: 700; font-size: 16px; }
.abc { font: bold 8px "Liberation Serif", serif; fill: #333; }
.ns, .nl { font: bold 7px "Open Sans", sans-serif; fill: #3a6fe8; }
.nl { font-size: 6px; }
.ab, .as { font: bold 9px "Open Sans", sans-serif; fill: #222; }
.as { font-size: 11px; fill: #444; }
.aa { font: 600 12px "Open Sans", sans-serif; fill: #222; }
.aa.as2 { font-size: 11px; }
.om { font: bold 17px "Liberation Serif", serif; fill: #4482ee; }
.hq { font: bold 12px "Open Sans", sans-serif; fill: #fff; }

/* scrollbar and page caption */
.scroll { width: 21px; flex: none; background: #f1f1f1; display: flex; flex-direction: column; align-items: center; padding: 8px 0; }
.scroll b { width: 17px; height: 455px; background: #c1c1c1; margin-top: 8px; }
.scroll i { border: 4.500px solid transparent; flex: none; }
.scroll .up { border-bottom: 5px solid #999; border-top: 0; }
.scroll .down { border-top: 5px solid #505050; border-bottom: 0; margin-top: auto; }
.caption { position: absolute; left: 750px; top: 31px; font: 70px/100px "Noto Sans CJK SC", sans-serif; color: #fff100; -webkit-text-stroke: 7px #222; paint-order: stroke fill; text-shadow: 0 0 4px rgba(0,0,0,.4); }
```
